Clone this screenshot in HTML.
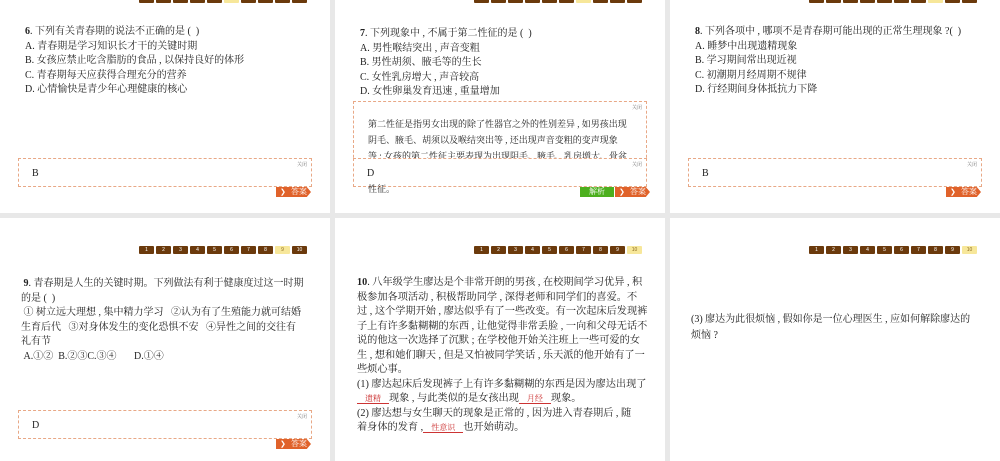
<!DOCTYPE html>
<html><head><meta charset="utf-8"><style>
body{margin:0;width:1000px;height:461px;background:#e8e8e8;position:relative;overflow:hidden;font-family:"Liberation Serif","Noto Serif CJK SC",serif;color:#222}
.p{position:absolute;background:#fff;overflow:hidden}
.nav{position:absolute;left:139px;height:8px;width:175px}
.nav span{position:absolute;top:0;width:15px;height:8px;background:#6b3a0c;border-radius:1px;color:#fff;font:5px "Liberation Sans",sans-serif;text-align:center;line-height:8px}
.nav span.on{background:#f7e79a;color:#8a6a20}
.t{position:absolute;font-size:10px;line-height:14.5px;white-space:nowrap}
.box{position:absolute;left:18px;width:292px;height:27px;border:1px dashed #e8a886;background:#fff}
.cl{position:absolute;right:4px;top:2px;font-size:5px;color:#777}
.ans{position:absolute;left:13px;top:9px;font-size:10px}
.btn{position:absolute;width:35px;height:10px;background:#e0622a;color:#fff;font-size:8px;line-height:10px;text-align:right;padding-right:4px;box-sizing:border-box;clip-path:polygon(0 0,88% 0,100% 50%,88% 100%,0 100%)}
.btn:before{content:"❯";position:absolute;left:4px;font-size:7px}
.jx{position:absolute;width:34px;height:10px;background:#4caf1e;color:#fff;font-size:8px;line-height:10px;text-align:center}
u{color:#c33;text-decoration:none;border-bottom:1px solid #c33;font-size:8px;padding:0 8px}
</style></head><body>

<div class="p" style="left:0;top:0;width:330px;height:213px">
<div class="nav" style="top:-5px"><span style="left:0">1</span><span style="left:17px">2</span><span style="left:34px">3</span><span style="left:51px">4</span><span style="left:68px">5</span><span class="on" style="left:85px">6</span><span style="left:102px">7</span><span style="left:119px">8</span><span style="left:136px">9</span><span style="left:153px">10</span></div>
<div class="t" style="left:25px;top:25px"><b>6</b>. 下列有关青春期的说法不正确的是 (&nbsp; )<br>A. 青春期是学习知识长才干的关键时期<br>B. 女孩应禁止吃含脂肪的食品 , 以保持良好的体形<br>C. 青春期每天应获得合理充分的营养<br>D. 心情愉快是青少年心理健康的核心</div>
<div class="box" style="top:158px"><span class="cl">关闭</span><span class="ans">B</span></div>
<div class="btn" style="left:276px;top:187px">答案</div>
</div>

<div class="p" style="left:335px;top:0;width:330px;height:213px">
<div class="nav" style="top:-5px"><span style="left:0">1</span><span style="left:17px">2</span><span style="left:34px">3</span><span style="left:51px">4</span><span style="left:68px">5</span><span style="left:85px">6</span><span class="on" style="left:102px">7</span><span style="left:119px">8</span><span style="left:136px">9</span><span style="left:153px">10</span></div>
<div class="t" style="left:25px;top:27px"><b>7</b>. 下列现象中 , 不属于第二性征的是 (&nbsp; )<br>A. 男性喉结突出 , 声音变粗<br>B. 男性胡须、腋毛等的生长<br>C. 女性乳房增大 , 声音较高<br>D. 女性卵巢发育迅速 , 重量增加</div>
<div class="box" style="left:18px;top:101px;height:84px;border-color:#e8a886"><span class="cl">关闭</span>
<div class="t" style="left:14px;top:14px;line-height:16px;font-size:9px">第二性征是指男女出现的除了性器官之外的性别差异 , 如男孩出现<br>阴毛、腋毛、胡须以及喉结突出等 , 还出现声音变粗的变声现象<br>等 ; 女孩的第二性征主要表现为出现阴毛、腋毛、乳房增大、骨盆</div></div>
<div class="box" style="top:158px"><span class="cl">关闭</span><span class="ans">D</span></div>
<div class="t" style="left:33px;top:182px;font-size:9px">性征。</div>
<div class="jx" style="left:245px;top:187px">解析</div>
<div class="btn" style="left:280px;top:187px">答案</div>
</div>

<div class="p" style="left:670px;top:0;width:330px;height:213px">
<div class="nav" style="top:-5px"><span style="left:0">1</span><span style="left:17px">2</span><span style="left:34px">3</span><span style="left:51px">4</span><span style="left:68px">5</span><span style="left:85px">6</span><span style="left:102px">7</span><span class="on" style="left:119px">8</span><span style="left:136px">9</span><span style="left:153px">10</span></div>
<div class="t" style="left:25px;top:25px"><b>8</b>. 下列各项中 , 哪项不是青春期可能出现的正常生理现象 ?(&nbsp; )<br>A. 睡梦中出现遗精现象<br>B. 学习期间常出现近视<br>C. 初潮期月经周期不规律<br>D. 行经期间身体抵抗力下降</div>
<div class="box" style="top:158px"><span class="cl">关闭</span><span class="ans">B</span></div>
<div class="btn" style="left:276px;top:187px">答案</div>
</div>

<div class="p" style="left:0;top:218px;width:330px;height:243px">
<div class="nav" style="top:28px"><span style="left:0">1</span><span style="left:17px">2</span><span style="left:34px">3</span><span style="left:51px">4</span><span style="left:68px">5</span><span style="left:85px">6</span><span style="left:102px">7</span><span style="left:119px">8</span><span class="on" style="left:136px">9</span><span style="left:153px">10</span></div>
<div class="t" style="left:21px;top:59px;font-size:10px"><b>&nbsp;9</b>. 青春期是人生的关键时期。下列做法有利于健康度过这一时期<br>的是 (&nbsp; )<br>&nbsp;① 树立远大理想 , 集中精力学习&nbsp;&nbsp; ②认为有了生殖能力就可结婚<br>生育后代&nbsp;&nbsp; ③对身体发生的变化恐惧不安&nbsp;&nbsp; ④异性之间的交往有<br>礼有节<br>&nbsp;A.①②&nbsp; B.②③C.③④&nbsp;&nbsp;&nbsp;&nbsp;&nbsp;&nbsp; D.①④</div>
<div class="box" style="top:192px"><span class="cl">关闭</span><span class="ans">D</span></div>
<div class="btn" style="left:276px;top:221px">答案</div>
</div>

<div class="p" style="left:335px;top:218px;width:330px;height:243px">
<div class="nav" style="top:28px"><span style="left:0">1</span><span style="left:17px">2</span><span style="left:34px">3</span><span style="left:51px">4</span><span style="left:68px">5</span><span style="left:85px">6</span><span style="left:102px">7</span><span style="left:119px">8</span><span style="left:136px">9</span><span class="on" style="left:153px">10</span></div>
<div class="t" style="left:22px;top:58px;font-size:10.2px"><b>10</b>. 八年级学生廖达是个非常开朗的男孩 , 在校期间学习优异 , 积<br>极参加各项活动 , 积极帮助同学 , 深得老师和同学们的喜爱。不<br>过 , 这个学期开始 , 廖达似乎有了一些改变。有一次起床后发现裤<br>子上有许多黏糊糊的东西 , 让他觉得非常丢脸 , 一向和父母无话不<br>说的他这一次选择了沉默 ; 在学校他开始关注班上一些可爱的女<br>生 , 想和她们聊天 , 但是又怕被同学笑话 , 乐天派的他开始有了一<br>些烦心事。<br>(1) 廖达起床后发现裤子上有许多黏糊糊的东西是因为廖达出现了<br><u>遗精</u>现象 , 与此类似的是女孩出现<u>月经</u>现象。<br>(2) 廖达想与女生聊天的现象是正常的 , 因为进入青春期后 , 随<br>着身体的发育 ,<u>性意识</u>也开始萌动。</div>
</div>

<div class="p" style="left:670px;top:218px;width:330px;height:243px">
<div class="nav" style="top:28px"><span style="left:0">1</span><span style="left:17px">2</span><span style="left:34px">3</span><span style="left:51px">4</span><span style="left:68px">5</span><span style="left:85px">6</span><span style="left:102px">7</span><span style="left:119px">8</span><span style="left:136px">9</span><span class="on" style="left:153px">10</span></div>
<div class="t" style="left:21px;top:94px;font-size:10px;line-height:16px">(3) 廖达为此很烦恼 , 假如你是一位心理医生 , 应如何解除廖达的<br>烦恼 ?</div>
</div>
</body></html>
